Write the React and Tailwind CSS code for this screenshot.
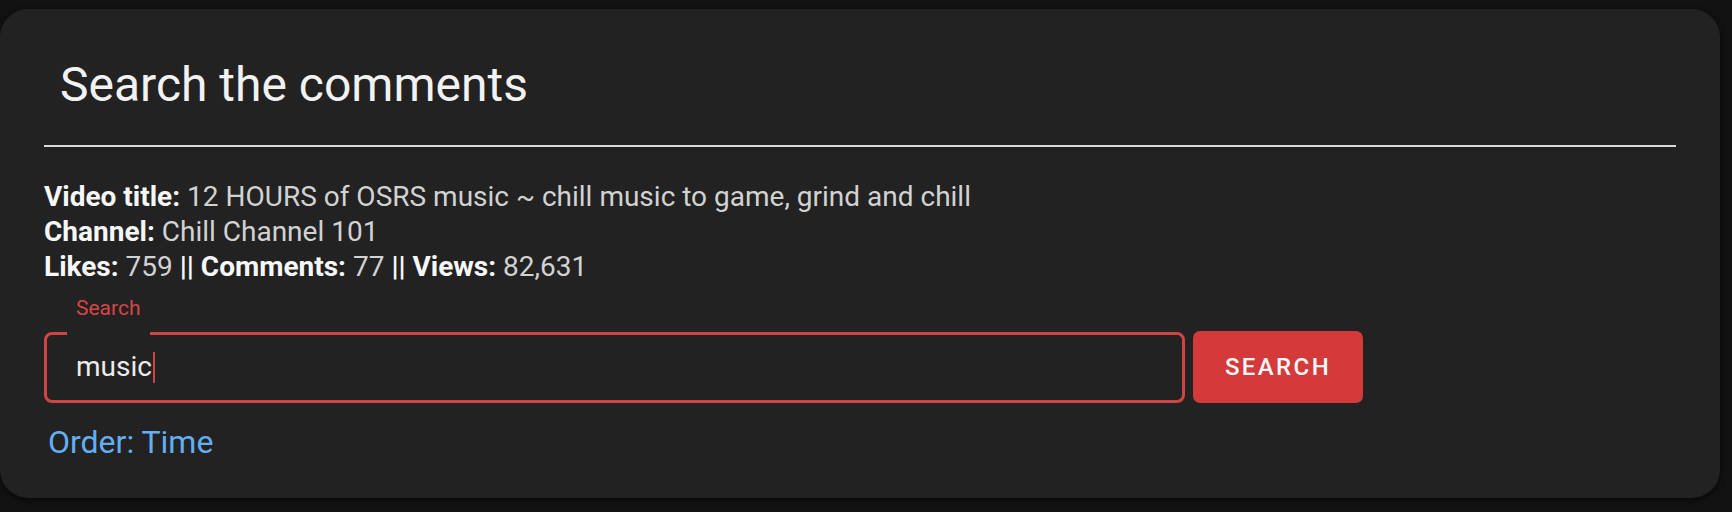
export default function App() {
  return (
    <div className="min-h-[512px] w-[1732px] bg-[#121212] pt-[9px]" style={{ fontFamily: 'Roboto, "Liberation Sans", sans-serif' }}>
      <div className="w-[1720px] rounded-[28px] bg-[#222222] px-[44px] pt-[48px] pb-[38px] shadow-[0_2px_6px_rgba(0,0,0,0.6)]">
        <h1 className="pl-[16px] text-[48px] font-normal leading-[56px] text-[#f2f2f2]">Search the comments</h1>
        <div className="mt-[32px] h-[2px] bg-[#dadada]" />
        <div className="mt-[32px] text-[28px] leading-[35px] text-[#d2d2d2]">
          <div>
            <span className="font-bold text-[#f7f7f7]">Video title:</span> 12 HOURS of OSRS music ~ chill music to game, grind and chill
          </div>
          <div>
            <span className="font-bold text-[#f7f7f7]">Channel:</span> Chill Channel 101
          </div>
          <div>
            <span className="font-bold text-[#f7f7f7]">Likes:</span> 759 <span className="font-bold text-[#f7f7f7]">||</span>{' '}
            <span className="font-bold text-[#f7f7f7]">Comments:</span> 77 <span className="font-bold text-[#f7f7f7]">||</span>{' '}
            <span className="font-bold text-[#f7f7f7]">Views:</span> 82,631
          </div>
        </div>
        <div className="mt-[12px] pl-[32px] text-[21px] leading-[24px] text-[#d64545]">Search</div>
        <div className="mt-[11px] flex items-center gap-[8px]">
          <div className="relative flex h-[71px] w-[1141px] items-center rounded-[8px] border-[3px] border-[#d24343] pl-[29px]">
            <span className="absolute top-[-3px] left-[20px] h-[3px] w-[83px] bg-[#222222]" />
            <span className="text-[28px] text-[#ececec]">music</span>
            <span className="ml-[1px] h-[31px] w-[2px] bg-[#d24343]" />
          </div>
          <button className="flex h-[72px] w-[170px] items-center justify-center rounded-[7px] bg-[#d43a3a] text-[24px] font-medium tracking-[2.4px] text-[#f8f8f8]">
            SEARCH
          </button>
        </div>
        <div className="mt-[21px] pl-[4px] text-[32px] leading-[36px] text-[#64aef4]">Order: Time</div>
      </div>
    </div>
  );
}
